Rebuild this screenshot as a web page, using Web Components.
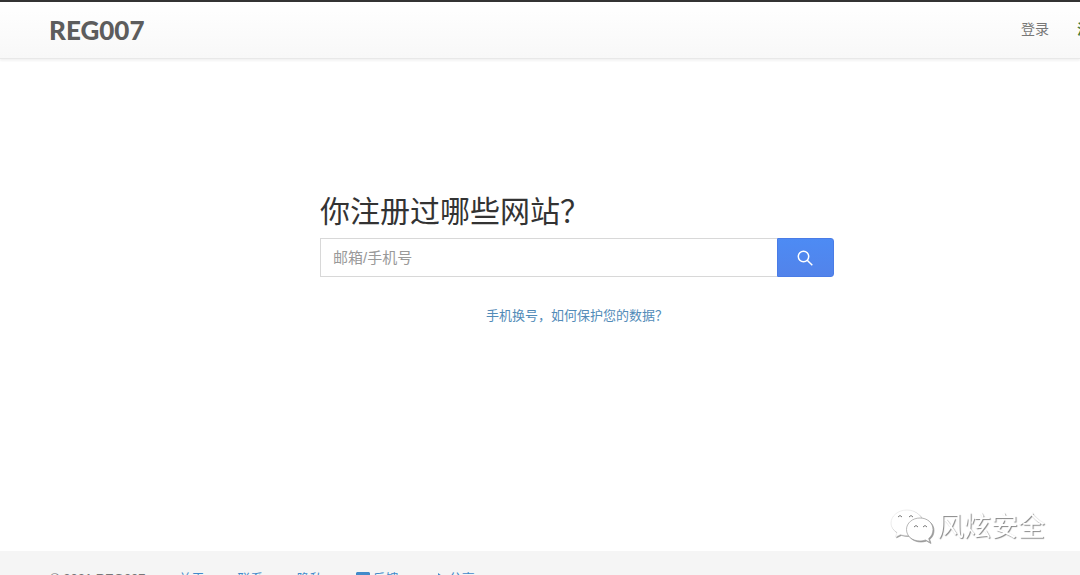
<!DOCTYPE html>
<html lang="zh-CN">
<head>
<meta charset="utf-8">
<meta name="viewport" content="width=device-width, initial-scale=1">
<title>REG007</title>
<style>
html, body { margin: 0; overflow-x: hidden; }
body { background: #fff; color: #333; font: 14px/20px "Liberation Sans", "Noto Sans CJK SC", sans-serif; }
</style>
</head>
<body>
<reg-page></reg-page>
<script>
class SiteHeader extends HTMLElement {
  constructor() {
    super();
    this.attachShadow({ mode: 'open' }).innerHTML = `
<style>
:host { display: block; overflow: hidden; border-top: 2px solid #333; border-bottom: 1px solid #e8e8e8; background: linear-gradient(#fff, #f8f8f8); box-shadow: 0 2px 2px #f3f3f3; }
header { display: flex; align-items: center; justify-content: space-between; height: 56px; padding-left: 49px; margin-right: -25px; }
.logo { font: 900 26px/32px Lato, sans-serif; color: #5d5d5d; text-decoration: none; }
nav { display: flex; gap: 28px; padding-bottom: 2px; }
::slotted(a) { color: #777; text-decoration: none; white-space: nowrap; }
::slotted(a.join) { color: #467c3c; font-weight: bold; }
</style>
<header><a class="logo" href="#">REG007</a><nav><slot></slot></nav></header>`;
  }
}

class SearchBox extends HTMLElement {
  constructor() {
    super();
    this.attachShadow({ mode: 'open' }).innerHTML = `
<style>
:host { display: block; width: 100%; max-width: 514px; }
form { display: grid; grid-template-columns: 1fr 57px; row-gap: 8px; margin: 0; }
label { grid-column: 1 / -1; font-size: 30px; line-height: 36px; color: #333; }
input { box-sizing: border-box; min-width: 0; width: 100%; height: 39px; margin: 0; padding: 0 12px; border: 1px solid #d8d8d8; border-right: 0; border-radius: 0; background: #fff; color: #555; font: inherit; font-size: 15px; outline: 0; }
input::placeholder { color: #999; opacity: 1; }
button { display: flex; align-items: center; justify-content: center; height: 39px; padding: 0 2px 0 0; border: 1px solid #4a7ce6; border-radius: 0 3px 3px 0; background: linear-gradient(#4d8bf4, #5283ea); }
svg { width: 16px; height: 16px; }
</style>
<form>
<label for="q"><slot></slot></label>
<input id="q" type="text" placeholder="邮箱/手机号">
<button type="button" aria-label="搜索"><svg viewBox="0 0 16 16" fill="none" stroke="#fff" stroke-width="1.5"><circle cx="6.500" cy="6.500" r="5.200"/><path d="M10.200 10.200L15.300 15.300"/></svg></button>
</form>`;
  }
}

class SiteFooter extends HTMLElement {
  constructor() {
    super();
    this.attachShadow({ mode: 'open' }).innerHTML = `
<style>
:host { display: block; background: #f5f5f5; color: #777; font-size: 13px; line-height: 20px; }
footer { display: flex; align-items: center; gap: 33px; padding: 18px 50px; }
a { display: flex; align-items: center; gap: 3px; color: #428bca; text-decoration: none; white-space: nowrap; }
small { font-size: 13px; white-space: nowrap; }
svg { width: 14px; height: 14px; }
</style>
<footer>
<small>© 2021 REG007</small>
<a href="#">关于</a><a href="#">联系</a><a href="#">隐私</a>
<a href="#"><svg viewBox="0 0 14 14"><path fill="currentColor" d="M1 0h12l1 1v11l-1 1H1l-1-1V1z"/><path d="M1 4l6 4 6-4" fill="none" stroke="#f5f5f5"/></svg>反馈</a>
<a href="#"><svg viewBox="0 0 14 14"><path fill="currentColor" d="M6 1l7 5-7 5V8C4 8 2 9 0 13 0 7 3 4 6 4z"/></svg>分享</a>
</footer>`;
  }
}

class WaterMark extends HTMLElement {
  constructor() {
    super();
    this.attachShadow({ mode: 'open' }).innerHTML = `
<style>
:host { display: flex; align-items: center; gap: 3px; color: #fff; font-size: 27px; line-height: 36px; text-shadow: 1px 1px 1px #888; white-space: nowrap; pointer-events: none; }
svg { width: 44px; height: 36px; filter: drop-shadow(1px 1px 0 #999); }
</style>
<svg viewBox="0 0 44 36">
<path fill="#fff" stroke="#ddd" stroke-width=".5" d="M17 1C8 1 1 7 1 14c0 4 2 7 6 9.500L5.500 28l5-2.500c2 .6 4 1 6.500 1 9 0 16-6 16-12.500S26 1 17 1z"/>
<path fill="#fff" stroke="#999" stroke-width=".7" d="M30 9c-7.500 0-13.500 5-13.500 11.500S22 32 30 32c2 0 4-.4 5.500-1l4.500 2.500-1.300-4C41.500 27.500 43 24 43 20.500 43 14 37.500 9 30 9z"/>
<path fill="none" stroke="#777" d="M8 8q2-3 4 0M19 8q2-3 4 0M24 18q2-3 4 0M33 18q2-3 4 0"/>
</svg><span><slot></slot></span>`;
  }
}

class RegPage extends HTMLElement {
  constructor() {
    super();
    this.attachShadow({ mode: 'open' }).innerHTML = `
<style>
:host { display: block; }
main { box-sizing: border-box; display: flex; flex-direction: column; align-items: center; min-height: calc(100vh - 83px); padding: 135px 20px 40px; }
search-box { margin-left: 74px; }
.tip { margin: 29px 0 0 74px; font-size: 13px; line-height: 20px; }
.tip a { color: #528bb8; text-decoration: none; }
water-mark { position: fixed; right: 35px; bottom: 30px; }
</style>
<site-header><a href="#">登录</a><a class="join" href="#">注册</a></site-header>
<main>
<search-box>你注册过哪些网站？</search-box>
<p class="tip"><a href="#">手机换号，如何保护您的数据？</a></p>
</main>
<site-footer></site-footer>
<water-mark>风炫安全</water-mark>`;
  }
}

customElements.define('site-header', SiteHeader);
customElements.define('search-box', SearchBox);
customElements.define('site-footer', SiteFooter);
customElements.define('water-mark', WaterMark);
customElements.define('reg-page', RegPage);
</script>
</body>
</html>
